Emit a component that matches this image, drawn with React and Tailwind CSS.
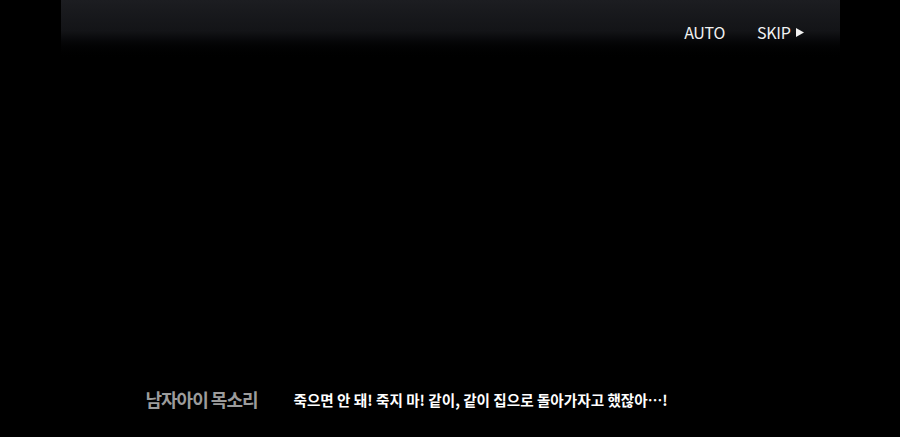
export default function App() {
  return (
    <div className="flex h-[437px] w-[900px] justify-center bg-black" style={{ fontFamily: '"Noto Sans CJK KR", "Noto Sans", sans-serif' }}>
      <div className="flex w-[779px] flex-col">
        {/* top bar with auto / skip controls */}
        <div className="flex h-[62px] items-start justify-end gap-[32px] bg-gradient-to-b from-[#1c1d21] via-[#131417] to-black pr-[36px] pt-[20px] text-[16px] font-normal text-[#f2f2f2]">
          <span className="tracking-[-0.3px]">AUTO</span>
          <span className="flex items-center gap-[5px] tracking-[-0.3px]">
            SKIP
            <svg width="8" height="9" viewBox="0 0 8 9">
              <path d="M0 0 L8 4.5 L0 9 Z" fill="#f2f2f2" />
            </svg>
          </span>
        </div>
        <div className="flex-1" />
        {/* dialogue line */}
        <div className="flex h-[50px] items-start pl-[85px]">
          <span className="w-[148px] text-[18px] font-bold leading-[24px] tracking-[-1px] text-[#9c9c9c]">남자아이 목소리</span>
          <span className="pt-[3px] text-[14.6px] font-bold leading-[20px] text-white">죽으면 안 돼! 죽지 마! 같이, 같이 집으로 돌아가자고 했잖아⋯!</span>
        </div>
      </div>
    </div>
  );
}
